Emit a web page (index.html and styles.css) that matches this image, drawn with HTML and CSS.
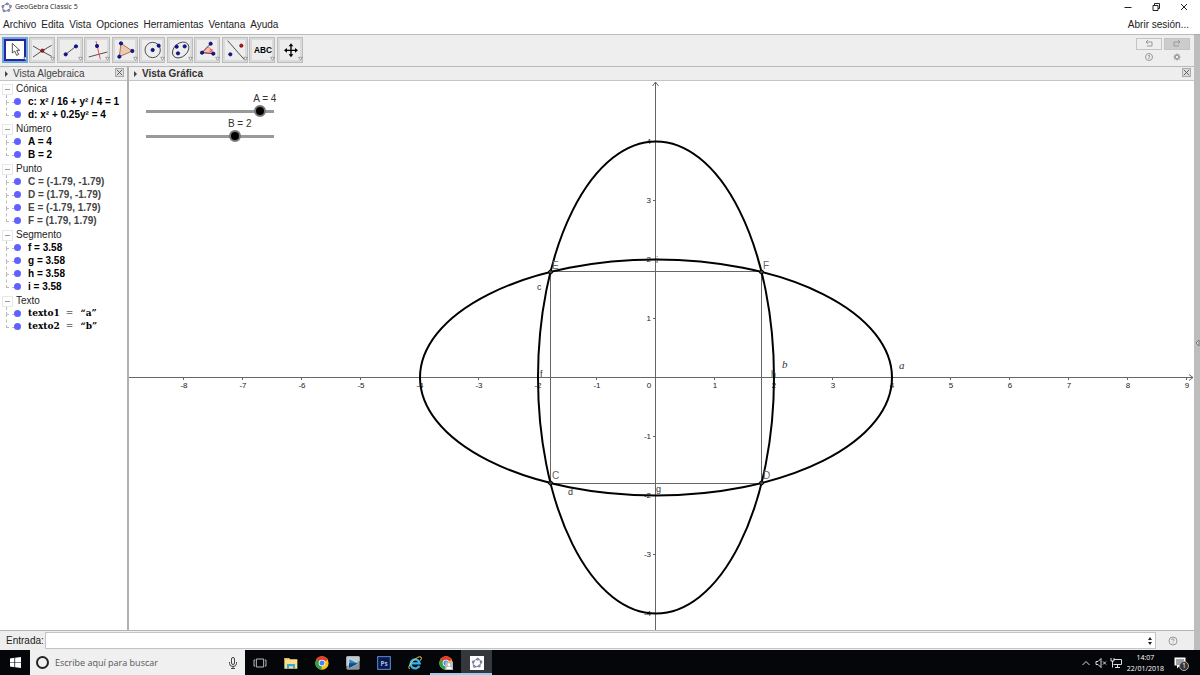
FILE: index.html
```html
<!DOCTYPE html>
<html lang="es">

<head>
  <meta charset="UTF-8">
  <meta name="viewport" content="width=device-width, initial-scale=1.0">
  <title>GeoGebra Classic 5</title>
  <link rel="stylesheet" href="styles.css">
</head>

<body>
  <!-- shared icon shapes -->
  <svg class="defs" width="0" height="0" aria-hidden="true">
    <symbol id="logo" viewBox="0 0 30 30">
      <ellipse cx="15" cy="15" rx="11" ry="9" fill="none" stroke="#666" stroke-width="2" transform="rotate(-25 15 15)" />
      <g fill="#9999ff" stroke="#333" stroke-width="1">
        <circle cx="17" cy="5" r="3" />
        <circle cx="26" cy="12" r="3" />
        <circle cx="21" cy="23" r="3" />
        <circle cx="8" cy="24" r="3" />
        <circle cx="5" cy="12" r="3" />
      </g>
    </symbol>
    <symbol id="drop" viewBox="0 0 78 78">
      <path d="M65 61h11l-5.500 9z" fill="#fff" stroke="#777" stroke-width="2" />
    </symbol>
    <symbol id="chrome" viewBox="0 0 42 42">
      <circle cx="21" cy="21" r="20" fill="#fbc116" />
      <path d="M21 21L3.700 11A20 20 0 0 1 38.300 11z" fill="#e33b2e" />
      <path d="M21 21L3.700 11A20 20 0 0 0 19 41z" fill="#30a04c" />
      <circle cx="21" cy="21" r="10" fill="#fff" />
      <circle cx="21" cy="21" r="7.500" fill="#4285f4" />
    </symbol>
  </svg>

  <header class="titlebar">
    <svg class="title-logo"><use href="#logo" /></svg>
    <span class="title">GeoGebra Classic 5</span>
    <div class="window-buttons">
      <button aria-label="Minimizar"><svg viewBox="0 0 10 10"><path d="M1.500 5.500h7" /></svg></button>
      <button aria-label="Restaurar"><svg viewBox="0 0 10 10"><path d="M2 3.500h5v5H2zM3.500 3.500v-2h5v5h-1.500" /></svg></button>
      <button aria-label="Cerrar"><svg viewBox="0 0 10 10"><path d="M2 2l6 6M8 2l-6 6" /></svg></button>
    </div>
  </header>

  <nav class="menubar">
    <a href="#">Archivo</a>
    <a href="#">Edita</a>
    <a href="#">Vista</a>
    <a href="#">Opciones</a>
    <a href="#">Herramientas</a>
    <a href="#">Ventana</a>
    <a href="#">Ayuda</a>
    <a href="#" class="signin">Abrir sesión...</a>
  </nav>

  <div class="workspace">
    <div class="app">
      <div class="toolbar">
        <div class="tools">
          <button class="tool selected" aria-label="Elige y mueve">
            <svg viewBox="0 0 78 78">
              <path d="M31 19v29l7-6 6 13 6-3-6-12h9z" fill="#fff" stroke="#333" stroke-width="2.500" />
              <use href="#drop" />
            </svg>
          </button>
          <button class="tool" aria-label="Intersección">
            <svg viewBox="0 0 78 78">
              <path d="M12 27Q36 42 68 58M12 60Q36 42 68 25" class="ink" />
              <circle cx="40" cy="41" r="5" class="red-dot" />
              <use href="#drop" />
            </svg>
          </button>
          <button class="tool" aria-label="Segmento">
            <svg viewBox="0 0 78 78">
              <path d="M26 52l31-24" class="ink" />
              <circle cx="26" cy="52" r="5" class="dot" />
              <circle cx="57" cy="28" r="5" class="dot" />
              <use href="#drop" />
            </svg>
          </button>
          <button class="tool" aria-label="Perpendicular">
            <svg viewBox="0 0 78 78">
              <path d="M14 60l56-15" class="ink" />
              <path d="M36 12l13 55" stroke="#e33" stroke-width="2.500" />
              <circle cx="39" cy="27" r="5" class="dot" />
              <use href="#drop" />
            </svg>
          </button>
          <button class="tool" aria-label="Polígono">
            <svg viewBox="0 0 78 78">
              <path d="M27 19l34 23-39 17z" fill="#ebc9b4" stroke="#a65f3c" stroke-width="2.500" />
              <circle cx="27" cy="19" r="5" class="dot" />
              <circle cx="61" cy="42" r="5" class="dot" />
              <circle cx="22" cy="59" r="5" class="dot" />
              <use href="#drop" />
            </svg>
          </button>
          <button class="tool" aria-label="Circunferencia">
            <svg viewBox="0 0 78 78">
              <circle cx="41" cy="39" r="23" class="ink" />
              <circle cx="41" cy="39" r="5" class="dot" />
              <circle cx="59" cy="26" r="5" class="dot" />
              <use href="#drop" />
            </svg>
          </button>
          <button class="tool" aria-label="Elipse">
            <svg viewBox="0 0 78 78">
              <ellipse cx="41" cy="39" rx="28" ry="20" transform="rotate(-42 41 39)" class="ink" />
              <circle cx="29" cy="29" r="5" class="dot" />
              <circle cx="53" cy="28" r="5" class="dot" />
              <circle cx="33" cy="49" r="5" class="dot" />
              <use href="#drop" />
            </svg>
          </button>
          <button class="tool" aria-label="Ángulo">
            <svg viewBox="0 0 78 78">
              <path d="M24 47l17-18Q54 34 54 49z" fill="#fbb" stroke="#e55" stroke-width="2" />
              <path d="M50 20L24 47l34 3" class="ink" />
              <circle cx="50" cy="20" r="5" class="dot" />
              <circle cx="24" cy="47" r="5" class="dot" />
              <circle cx="58" cy="50" r="5" class="dot" />
              <text x="52" y="45" class="alpha">α</text>
              <use href="#drop" />
            </svg>
          </button>
          <button class="tool" aria-label="Simetría axial">
            <svg viewBox="0 0 78 78">
              <path d="M17 11l50 57" class="ink" />
              <circle cx="25" cy="52" r="5" class="dot" />
              <circle cx="58" cy="26" r="5" class="red-dot" />
              <use href="#drop" />
            </svg>
          </button>
          <button class="tool" aria-label="Texto">
            <svg viewBox="0 0 78 78">
              <text x="42" y="49" class="abc">ABC</text>
              <use href="#drop" />
            </svg>
          </button>
          <button class="tool" aria-label="Desplaza vista gráfica">
            <svg viewBox="0 0 78 78">
              <path d="M42 24v32M26 40h32" stroke="#000" stroke-width="4" />
              <path d="M42 19l7 9H35zM42 61l7-9H35zM21 40l9-7v14zM63 40l-9-7v14z" />
              <use href="#drop" />
            </svg>
          </button>
        </div>
        <div class="toolbar-right">
          <button class="undo" aria-label="Deshacer"><svg viewBox="0 0 10 10"><path d="M4 1L2 3l2 2M2 3h6v4H3" /></svg></button>
          <button class="undo redo" aria-label="Rehacer"><svg viewBox="0 0 10 10"><path d="M6 1l2 2-2 2M8 3H2v4h5" /></svg></button>
          <button class="mini" aria-label="Ayuda"><svg viewBox="0 0 10 10"><circle cx="5" cy="5" r="3.500" /><path d="M4 4q1-1.500 2 0L5 5.500V7" /></svg></button>
          <button class="mini" aria-label="Preferencias"><svg viewBox="0 0 10 10"><circle cx="5" cy="5" r="2" stroke-width="1.500" /><path d="M5 1.500v1.500M5 7v1.500M1.500 5H3M7 5h1.500M2.500 2.500l1 1M6.500 6.500l1 1M7.500 2.500l-1 1M3.500 6.500l-1 1" /></svg></button>
        </div>
      </div>

      <div class="views">
        <aside class="algebra">
          <div class="view-header">
            <span class="triangle"></span>
            <h2>Vista Algebraica</h2>
            <button class="close" aria-label="Cerrar"><svg viewBox="0 0 10 10"><path d="M2 2l6 6M8 2l-6 6" /></svg></button>
          </div>
          <ul class="tree">
            <li class="group">Cónica
              <ul>
                <li>c: x² / 16 + y² / 4 = 1</li>
                <li>d: x² + 0.25y² = 4</li>
              </ul>
            </li>
            <li class="group">Número
              <ul>
                <li>A = 4</li>
                <li>B = 2</li>
              </ul>
            </li>
            <li class="group">Punto
              <ul class="dependent">
                <li>C = (-1.79, -1.79)</li>
                <li>D = (1.79, -1.79)</li>
                <li>E = (-1.79, 1.79)</li>
                <li>F = (1.79, 1.79)</li>
              </ul>
            </li>
            <li class="group">Segmento
              <ul>
                <li>f = 3.58</li>
                <li>g = 3.58</li>
                <li>h = 3.58</li>
                <li>i = 3.58</li>
              </ul>
            </li>
            <li class="group">Texto
              <ul class="latex">
                <li>texto1 <i>=</i> “a”</li>
                <li>texto2 <i>=</i> “b”</li>
              </ul>
            </li>
          </ul>
        </aside>

        <main class="graphics">
          <div class="view-header">
            <span class="triangle"></span>
            <h2>Vista Gráfica</h2>
            <button class="close" aria-label="Cerrar"><svg viewBox="0 0 10 10"><path d="M2 2l6 6M8 2l-6 6" /></svg></button>
          </div>
          <div class="canvas">
            <!-- origin at 0,0 and 59 units per step -->
            <svg class="plot" viewBox="-527 -297 1065 549" preserveAspectRatio="xMidYMid slice">
              <g class="axis">
                <path d="M-527 -0.500H537M533 -3.500l4 3-4 3" />
                <path d="M-0.500 252V-296M-3.500 -292l3-4 3 4" />
                <path d="M-472.500 0v2M-413.500 0v2M-354.500 0v2M-295.500 0v2M-236.500 0v2M-177.500 0v2M-118.500 0v2M-59.500 0v2M58.500 0v2M117.500 0v2M176.500 0v2M235.500 0v2M294.500 0v2M353.500 0v2M412.500 0v2M471.500 0v2M530.500 0v2" />
                <path d="M0 -236.500h-3M0 -177.500h-3M0 -118.500h-3M0 -59.500h-3M0 58.500h-3M0 117.500h-3M0 176.500h-3M0 235.500h-3" />
              </g>
              <g class="numbers">
                <text x="-472" y="10">-8</text>
                <text x="-413" y="10">-7</text>
                <text x="-354" y="10">-6</text>
                <text x="-295" y="10">-5</text>
                <text x="-236" y="10">-4</text>
                <text x="-177" y="10">-3</text>
                <text x="-118" y="10">-2</text>
                <text x="-59" y="10">-1</text>
                <text x="-7" y="10">0</text>
                <text x="59" y="10">1</text>
                <text x="118" y="10">2</text>
                <text x="177" y="10">3</text>
                <text x="236" y="10">4</text>
                <text x="295" y="10">5</text>
                <text x="354" y="10">6</text>
                <text x="413" y="10">7</text>
                <text x="472" y="10">8</text>
                <text x="531" y="10">9</text>
              </g>
              <g class="numbers vertical">
                <text x="-5" y="-234">4</text>
                <text x="-5" y="-175">3</text>
                <text x="-5" y="-116">2</text>
                <text x="-5" y="-57">1</text>
                <text x="-5" y="61">-1</text>
                <text x="-5" y="120">-2</text>
                <text x="-5" y="179">-3</text>
                <text x="-5" y="238">-4</text>
              </g>
              <rect x="-105.500" y="-106.500" width="211" height="212" class="segments" />
              <g class="conics">
                <ellipse cx="0" cy="-0.500" rx="236" ry="118" />
                <ellipse cx="0" cy="-0.500" rx="118" ry="236" />
              </g>
              <g class="points">
                <circle cx="-105.500" cy="-106" r="2" />
                <circle cx="105.500" cy="-106" r="2" />
                <circle cx="-105.500" cy="105" r="2" />
                <circle cx="105.500" cy="105" r="2" />
              </g>
              <g class="point-labels">
                <text x="-104" y="-109">E</text>
                <text x="107" y="-109">F</text>
                <text x="-104" y="101">C</text>
                <text x="107" y="101">D</text>
              </g>
              <g class="object-labels">
                <text x="-119" y="-88">c</text>
                <text x="-88" y="117">d</text>
                <text x="-116" y="-1">f</text>
                <text x="0" y="114">g</text>
                <text x="115" y="-1">h</text>
                <text x="0" y="-115">i</text>
              </g>
              <g class="math">
                <text x="126" y="-10">b</text>
                <text x="243" y="-9">a</text>
              </g>
            </svg>
            <div class="sliders">
              <div class="slider">
                <label for="sliderA" style="margin-left: 90%">A = 4</label>
                <input type="range" id="sliderA" min="-5" max="5" step="0.1" value="4">
              </div>
              <div class="slider">
                <label for="sliderB" style="margin-left: 70%">B = 2</label>
                <input type="range" id="sliderB" min="-5" max="5" step="0.1" value="2">
              </div>
            </div>
          </div>
        </main>
      </div>

      <form class="input-bar">
        <label for="entrada">Entrada:</label>
        <div class="entry">
          <input type="text" id="entrada" autocomplete="off">
          <svg viewBox="0 0 6 8" aria-hidden="true"><path d="M3 0l2 3H1zM3 8l2-3H1z" fill="#222" /></svg>
        </div>
        <button type="button" class="help" aria-label="Ayuda de entrada"><svg viewBox="0 0 10 10"><circle cx="5" cy="5" r="4" /><path d="M3.500 4Q4 2.500 5 2.700T6 4.300L5 5.500M5 6.500v1" /></svg></button>
      </form>
    </div>
    <button class="side-strip" aria-label="Apariencias"><svg viewBox="0 0 5 8"><path d="M4 1v6L1 4z" /></svg></button>
  </div>

  <footer class="taskbar">
    <button class="start" aria-label="Inicio">
      <svg viewBox="0 0 30 30"><path d="M0 4l12-2v12H0zM14 2l16-2v14H14zM0 16h12v12L0 26zM14 16h16v14l-16-2z" fill="#fff" /></svg>
    </button>
    <div class="search">
      <span class="cortana"></span>
      <input type="text" placeholder="Escribe aquí para buscar" aria-label="Escribe aquí para buscar">
      <svg class="mic" viewBox="0 0 10 12"><rect x="3.500" y="0.500" width="3" height="7" rx="1.500" /><path d="M1.500 5v1.500q0 3 3.500 3t3.500-3V5M5 9.500V12M3 11.500h4" /></svg>
    </div>
    <div class="apps">
      <button aria-label="Vista de tareas">
        <svg viewBox="0 0 42 42"><path d="M10 9h22v24H10zM6 12H3v18h3M36 12h3v18h-3" fill="none" stroke="#ddd" stroke-width="2.500" /></svg>
      </button>
      <button aria-label="Explorador de archivos">
        <svg viewBox="0 0 42 42"><path d="M1 6h14l3 4h22v28H1z" fill="#fbe08c" /><path d="M1 6h14l3 4H1z" fill="#e8b33c" /><path d="M9 24h24v14h-6v-7H15v7H9z" fill="#35a7e6" /></svg>
      </button>
      <button aria-label="Google Chrome">
        <svg><use href="#chrome" /></svg>
      </button>
      <button aria-label="Reproductor">
        <svg viewBox="0 0 42 42"><rect x="1" y="1" width="40" height="40" rx="4" fill="#8c9295" /><path d="M1 5q0-4 4-4h32q4 0 4 4v10L1 30z" fill="#c5c9cb" /><path d="M9 8l28 14L9 37z" fill="#1e8bd1" stroke="#fff" stroke-width="1.500" /><path d="M9 22h28L9 37z" fill="#124a82" /></svg>
      </button>
      <button aria-label="Photoshop">
        <svg viewBox="0 0 42 42"><rect x="2" y="2" width="38" height="38" fill="#0c1846" stroke="#5c8fe0" stroke-width="3" /><text x="21" y="29" class="ps">Ps</text></svg>
      </button>
      <button aria-label="Internet Explorer">
        <svg viewBox="0 0 42 42"><path d="M34 29A13.500 13.500 0 1 1 35 22H11" fill="none" stroke="#35b5ee" stroke-width="7" /><path d="M5 39Q-3 33 14 16T39 3Q43 6 37 14" fill="none" stroke="#f5cf46" stroke-width="3" /></svg>
      </button>
      <button class="running" aria-label="Chrome, perfil">
        <svg viewBox="0 0 42 42"><use href="#chrome" /><rect x="19" y="17" width="23" height="25" fill="#bbb" /><circle cx="30" cy="26" r="4" fill="#fff" /><path d="M22 39v-3q0-4 8-4t8 4v3z" fill="#fff" /></svg>
      </button>
      <button class="running active" aria-label="GeoGebra">
        <svg viewBox="0 0 42 42"><rect width="42" height="42" fill="#fff" /><use href="#logo" x="4" y="4" width="34" height="34" /></svg>
      </button>
    </div>
    <div class="tray">
      <svg viewBox="0 0 12 12"><path d="M2.500 8L6 4.500 9.500 8" /></svg>
      <svg viewBox="0 0 12 12"><path d="M1 4.500h2l3-3v9l-3-3H1zM8 4.500l3 3M11 4.500l-3 3" /></svg>
      <svg viewBox="0 0 12 12"><path d="M4 2.500h7.500v5H3.500M7.500 8v2.500M5 10.500h5M1 1v3h3V1M2.500 4v6.500" /></svg>
      <div class="clock">
        <time>14:07</time>
        <time>22/01/2018</time>
      </div>
      <div class="notifications">
        <svg viewBox="0 0 12 12"><path d="M0.500 0.500h11v8H6l-3 3v-3H0.500z" fill="#fff" stroke="none" /><path d="M2 3h8M2 5h8M2 7h5" stroke="#111" stroke-width="0.800" /></svg>
        <span class="badge">1</span>
      </div>
    </div>
  </footer>
</body>

</html>
```
FILE: styles.css
```css
* {
  box-sizing: border-box;
}

body {
  margin: 0;
  height: 100vh;
  display: flex;
  flex-direction: column;
  font-family: "Liberation Sans", Arial, sans-serif;
  font-size: 10px;
  color: #222;
  background: #fff;
  overflow: hidden;
}

button {
  padding: 0;
  border: 0;
  background: none;
  font: inherit;
  display: flex;
  align-items: center;
  justify-content: center;
}

svg {
  display: block;
}

.defs {
  position: absolute;
}

ul {
  list-style: none;
  margin: 0;
  padding: 0;
}

/* Title bar and menu */
.titlebar {
  display: flex;
  align-items: center;
  height: 14px;
  padding: 0 2px 0 1px;
}

.title-logo {
  width: 11px;
  height: 11px;
}

.title {
  margin-left: 3px;
  font-family: "Open Sans", "Noto Sans", sans-serif;
  font-size: 7px;
  line-height: 14px;
}

.window-buttons {
  display: flex;
  margin-left: auto;
}

.window-buttons button {
  width: 28px;
}

.window-buttons svg {
  width: 10px;
  height: 10px;
}

.window-buttons path,
.close path,
.undo path,
.mini path,
.mini circle,
.help path,
.help circle {
  fill: none;
  stroke: #222;
}

.menubar {
  display: flex;
  align-items: center;
  gap: 5px;
  height: 20px;
  padding: 0 11px 0 3px;
}

.menubar a {
  color: #222;
  text-decoration: none;
}

.menubar .signin {
  margin-left: auto;
}

.workspace {
  flex: 1;
  min-height: 0;
  display: flex;
}

.app {
  flex: 1;
  min-width: 0;
  display: flex;
  flex-direction: column;
}

/* Toolbar */
.toolbar {
  display: flex;
  justify-content: space-between;
  align-items: center;
  height: 32px;
  padding: 0 4px 2px 2px;
  background: #eee;
  border-top: 1px solid #bbb;
}

.tools {
  display: grid;
  grid-template-columns: repeat(11, 1fr);
  width: 302px;
}

.tool {
  width: 26px;
  height: 26px;
  background: #ededed;
  border: 1px solid #bdbdbd;
  box-shadow: inset 0 0 0 2px #dadada;
}

.tool svg {
  width: 26px;
  height: 26px;
  flex: none;
}

.tool.selected {
  background: #fff;
  border: 2px solid #6fa8d6;
  box-shadow: inset 0 0 0 2px #2525a8;
}

.ink {
  fill: none;
  stroke: #333;
  stroke-width: 2.5;
}

.dot {
  fill: #1111bb;
  stroke: #000044;
  stroke-width: 2;
}

.red-dot {
  fill: #cc1111;
  stroke: #550000;
  stroke-width: 2;
}

.alpha {
  font-size: 18px;
  fill: #e22;
  text-anchor: middle;
}

.abc {
  font-size: 25px;
  font-weight: bold;
  text-anchor: middle;
}

.toolbar-right {
  display: grid;
  grid-template-columns: 26px 26px;
  gap: 2px;
}

.toolbar-right svg {
  width: 10px;
  height: 10px;
}

.undo {
  height: 12px;
  border: 1px solid #c4c4c4;
}

.undo.redo {
  background: #ccc;
}

.undo path,
.mini path,
.mini circle,
.help path,
.help circle {
  stroke: #999;
}

/* Views */
.views {
  flex: 1;
  min-height: 0;
  display: flex;
}

.algebra {
  width: 129px;
  border-right: 2px solid #b0b0b0;
}

.graphics {
  flex: 1;
  min-width: 0;
  display: flex;
  flex-direction: column;
}

.view-header {
  display: flex;
  align-items: center;
  height: 15px;
  padding: 0 3px 0 5px;
  background: #eee;
  border-top: 1px solid #b8b8b8;
  border-bottom: 1px solid #c4c4c4;
}

.view-header h2 {
  margin: 0 0 0 5px;
  font-size: 10px;
  font-weight: normal;
  line-height: 13px;
  color: #444;
}

.graphics .view-header h2 {
  font-weight: bold;
  color: #333;
}

.triangle {
  border-left: 3px solid #444;
  border-top: 3px solid transparent;
  border-bottom: 3px solid transparent;
}

.close {
  width: 9px;
  height: 9px;
  margin: 0 0 2px auto;
  border: 1px solid #aaa;
  background: #ddd;
}

.close svg {
  width: 9px;
  height: 9px;
  flex: none;
}

.close path {
  stroke: #555;
}

/* Object tree */
.tree {
  line-height: 13px;
  padding-top: 1px;
}

.group {
  position: relative;
  padding-left: 16px;
}

.group + .group {
  margin-top: 1px;
}

/* fold box with its minus sign */
.group::before {
  content: "";
  position: absolute;
  left: 2px;
  top: 2px;
  width: 9px;
  height: 9px;
  border: 1px solid #e8e8e8;
  background: linear-gradient(#999, #999) center / 5px 1px no-repeat;
}

.group li {
  position: relative;
  padding-left: 12px;
  font-weight: bold;
  color: #000;
  white-space: nowrap;
}

/* branch line */
.group li::before {
  content: "";
  position: absolute;
  left: -10px;
  top: -6px;
  width: 8px;
  height: 13px;
  border-left: 1px dashed #bbb;
  border-bottom: 1px dashed #bbb;
}

.group li:first-child::before {
  top: 0;
  height: 7px;
}

/* visibility bullet */
.group li::after {
  content: "";
  position: absolute;
  left: -2px;
  top: 3px;
  width: 7px;
  height: 7px;
  border-radius: 50%;
  background: #6161ff;
}

.group .dependent li {
  color: #444;
}

.latex {
  font-family: "DejaVu Serif", serif;
  font-size: 9px;
}

.latex i {
  margin: 0 4px 0 3px;
  font-style: normal;
  font-weight: normal;
}

/* Drawing area */
.canvas {
  position: relative;
  flex: 1;
  min-height: 0;
}

.plot {
  width: 100%;
  height: 100%;
}

.axis {
  fill: none;
  stroke: #666;
}

.numbers {
  font-size: 8px;
  fill: #222;
  text-anchor: middle;
}

.numbers.vertical {
  text-anchor: end;
}

.segments {
  fill: none;
  stroke: #666;
}

.conics {
  fill: none;
  stroke: #000;
  stroke-width: 2;
}

.points {
  fill: #444;
  stroke: #000;
}

.point-labels {
  font-size: 10px;
  fill: #666;
}

.object-labels {
  font-size: 9px;
  fill: #333;
}

.math {
  font-family: "Liberation Serif", serif;
  font-style: italic;
  font-size: 11px;
  fill: #333;
}

.sliders {
  position: absolute;
  left: 10px;
  top: 11px;
}

.slider {
  width: 127px;
  height: 25px;
}

.slider label {
  display: block;
  line-height: 13px;
  white-space: nowrap;
  color: #333;
}

.slider input {
  appearance: none;
  display: block;
  width: 139px;
  height: 12px;
  margin: 0 0 0 1px;
  background: linear-gradient(#999, #999) center / 128px 3px no-repeat;
}

.slider input::-webkit-slider-thumb {
  appearance: none;
  width: 12px;
  height: 12px;
  border: 2px solid #777;
  border-radius: 50%;
  background: #000;
}

/* Input bar */
.input-bar {
  display: flex;
  align-items: center;
  height: 20px;
  padding: 0 4px 0 6px;
  background: #eee;
  border-top: 1px solid #b5b5b5;
}

.entry {
  flex: 1;
  display: flex;
  align-items: center;
  height: 17px;
  margin-left: 1px;
  padding-right: 2px;
  background: #fff;
  border: 1px solid #c4c4c4;
}

.entry input {
  flex: 1;
  border: 0;
  padding: 0 3px;
  outline: none;
  font: inherit;
}

.entry svg {
  width: 6px;
  height: 8px;
}

.help {
  width: 34px;
}

.help svg {
  width: 10px;
  height: 10px;
}

.side-strip {
  width: 6px;
  background: #bdbdbd;
  border-top: 1px solid #aaa;
}

.side-strip svg {
  width: 5px;
  height: 8px;
  flex: none;
  fill: #ddd;
  stroke: #777;
}

/* Windows taskbar */
.taskbar {
  display: flex;
  height: 25px;
  background: #04060a;
  color: #fff;
  font-family: "Open Sans", "Noto Sans", sans-serif;
}

.start {
  width: 30px;
}

.start svg {
  width: 11px;
  height: 11px;
}

.search {
  display: flex;
  align-items: center;
  width: 215px;
  padding: 0 7px 0 6px;
  background: #f0f0f0;
}

.cortana {
  width: 13px;
  height: 13px;
  border: 2px solid #222;
  border-radius: 50%;
}

.search input {
  flex: 1;
  min-width: 0;
  padding: 0 0 0 6px;
  border: 0;
  outline: none;
  background: none;
  font-family: inherit;
  font-size: 9px;
}

.search input::placeholder {
  color: #555;
}

.mic {
  width: 10px;
  height: 12px;
  fill: none;
  stroke: #444;
}

.apps {
  display: grid;
  grid-template-columns: repeat(8, 1fr);
  width: 247px;
}

.apps svg {
  width: 14px;
  height: 14px;
}

.ps {
  font-size: 19px;
  font-weight: bold;
  fill: #9fc4ff;
  text-anchor: middle;
}

.running {
  border-top: 2px solid transparent;
  border-bottom: 2px solid #9ccbee;
}

.running.active {
  background: #34373b;
}

.tray {
  display: flex;
  align-items: center;
  gap: 3px;
  margin-left: auto;
  padding-right: 14px;
}

.tray svg {
  width: 12px;
  height: 12px;
  fill: none;
  stroke: #ddd;
}

.clock {
  display: flex;
  flex-direction: column;
  align-items: center;
  margin-left: 2px;
  font-size: 7px;
  line-height: 11px;
}

.notifications {
  position: relative;
  margin-left: 7px;
}

.badge {
  position: absolute;
  left: 5px;
  top: 4px;
  width: 10px;
  height: 10px;
  border: 1px solid #aaa;
  border-radius: 50%;
  background: #333;
  font-size: 7px;
  line-height: 8px;
  text-align: center;
}
```
